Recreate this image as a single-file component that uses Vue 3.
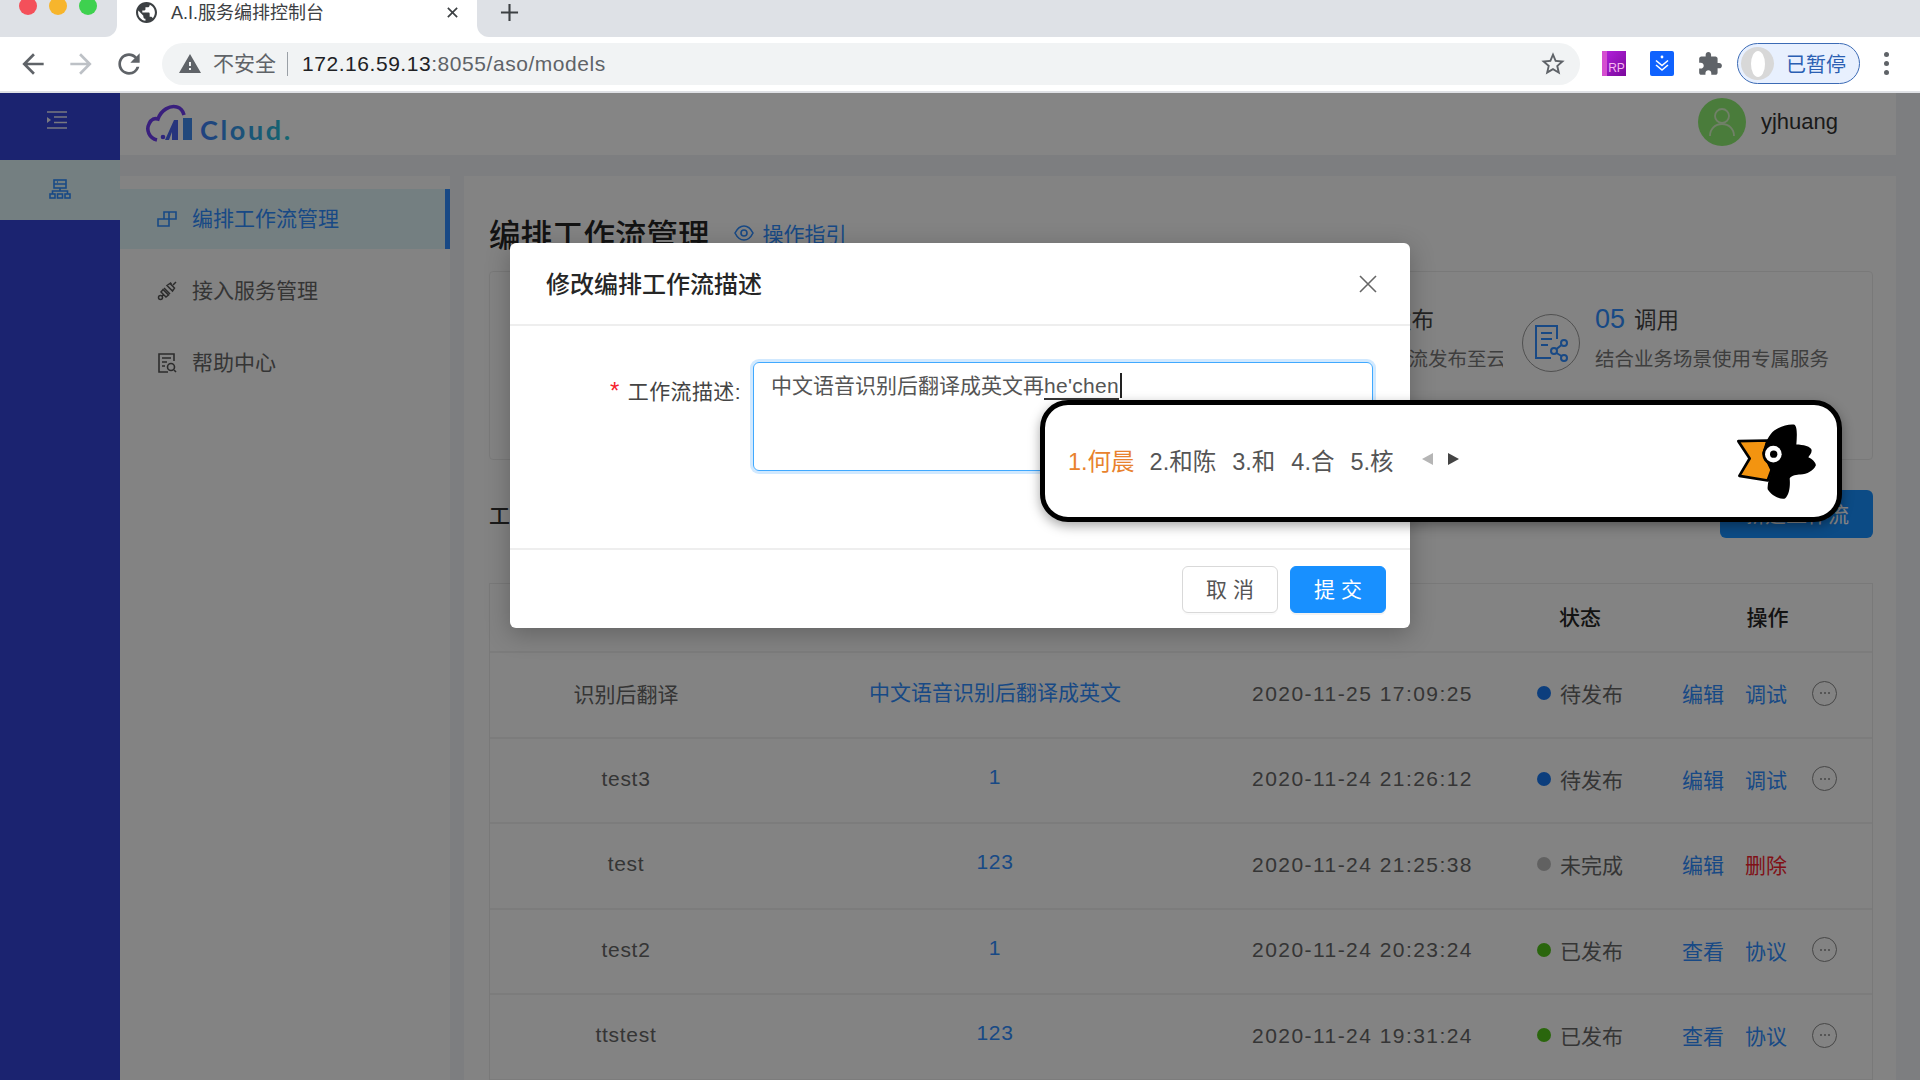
<script setup>
import { ref } from 'vue';

const candidates = ['2.和陈', '3.和', '4.合', '5.核'];

const rows = ref([
    { name: '识别后翻译', desc: '中文语音识别后翻译成英文', time: '2020-11-25 17:09:25', status: 'wait', label: '待发布', ops: ['编辑', '调试'], more: true },
    { name: 'test3', desc: '1', time: '2020-11-24 21:26:12', status: 'wait', label: '待发布', ops: ['编辑', '调试'], more: true },
    { name: 'test', desc: '123', time: '2020-11-24 21:25:38', status: 'none', label: '未完成', ops: ['编辑', '删除'], more: false },
    { name: 'test2', desc: '1', time: '2020-11-24 20:23:24', status: 'done', label: '已发布', ops: ['查看', '协议'], more: true },
    { name: 'ttstest', desc: '123', time: '2020-11-24 19:31:24', status: 'done', label: '已发布', ops: ['查看', '协议'], more: true }
]);

const steps = [
    { no: '01', title: '创建', sub: '新建编排工作流' },
    { no: '02', title: '编排', sub: '拖拽组件编排' },
    { no: '03', title: '调试', sub: '在线调试工作流' },
    { no: '04', title: '发布', sub: '将工作流发布至云端服务' },
    { no: '05', title: '调用', sub: '结合业务场景使用专属服务' }
];

const isLatin = (text) => /^[a-z0-9]+$/i.test(text);
</script>

<template>
    <div class="screen">
        <div class="tabstrip">
            <div class="strip-left">
                <div class="lights">
                    <span class="light red"></span>
                    <span class="light yellow"></span>
                    <span class="light green"></span>
                </div>
            </div>
            <div class="tab">
                <svg class="globe" viewBox="2 2 20 20"><path fill="#3c4043" d="M12 2C6.48 2 2 6.48 2 12s4.48 10 10 10 10-4.48 10-10S17.52 2 12 2zm-1 17.93c-3.95-.49-7-3.85-7-7.93 0-.62.08-1.21.21-1.79L9 15v1c0 1.1.9 2 2 2v1.93zm6.9-2.54c-.26-.81-1-1.39-1.9-1.39h-1v-3c0-.55-.45-1-1-1H8v-2h2c.55 0 1-.45 1-1V7h2c1.1 0 2-.9 2-2v-.41c2.93 1.19 5 4.06 5 7.41 0 2.08-.8 3.97-2.1 5.39z"/></svg>
                <span class="tab-title">A.I.服务编排控制台</span>
                <svg class="tab-close" viewBox="0 0 14 14"><path d="M2 2l10 10M12 2L2 12" stroke="#3c4043" stroke-width="1.8" fill="none"/></svg>
            </div>
            <div class="strip-right">
                <svg class="tab-plus" viewBox="0 0 20 20"><path d="M10 1v18M1 10h18" stroke="#3c4043" stroke-width="2.2" fill="none"/></svg>
            </div>
        </div>

        <div class="toolbar">
            <svg class="nav-icon" viewBox="0 0 24 24"><path fill="#5f6368" d="M20 11H7.83l5.59-5.59L12 4l-8 8 8 8 1.41-1.41L7.83 13H20v-2z"/></svg>
            <svg class="nav-icon" viewBox="0 0 24 24"><path fill="#bdc1c6" d="M12 4l-1.41 1.41L16.17 11H4v2h12.17l-5.58 5.59L12 20l8-8z"/></svg>
            <svg class="nav-icon" viewBox="0 0 24 24"><path fill="#5f6368" d="M17.65 6.35A7.958 7.958 0 0 0 12 4c-4.42 0-7.99 3.58-7.99 8s3.57 8 7.99 8c3.73 0 6.84-2.55 7.73-6h-2.08A5.99 5.99 0 0 1 12 18c-3.31 0-6-2.69-6-6s2.69-6 6-6c1.66 0 3.14.69 4.22 1.78L13 11h7V4l-2.35 2.35z"/></svg>
            <div class="omnibox">
                <svg class="warn" viewBox="0 0 24 24"><path fill="#5f6368" d="M1 21h22L12 2 1 21zm12-3h-2v-2h2v2zm0-4h-2v-4h2v4z"/></svg>
                <span class="insecure">不安全</span>
                <span class="sep"></span>
                <span class="url"><b>172.16.59.13</b>:8055/aso/models</span>
                <svg class="star" viewBox="0 0 24 24"><path fill="#5f6368" d="M22 9.24l-7.19-.62L12 2 9.19 8.63 2 9.24l5.46 4.73L5.82 21 12 17.27 18.18 21l-1.63-7.03L22 9.24zM12 15.4l-3.76 2.27 1-4.28-3.32-2.88 4.38-.38L12 6.1l1.71 4.04 4.38.38-3.32 2.88 1 4.28L12 15.4z"/></svg>
            </div>
            <div class="ext ext-rp"><span>RP</span></div>
            <div class="ext ext-blue">
                <svg viewBox="0 0 24 24"><circle cx="12" cy="6" r="1.4" fill="#fff"/><path d="M6 9.5l6 5 6-5M6 14l6 5 6-5" stroke="#fff" stroke-width="1.6" fill="none"/></svg>
            </div>
            <svg class="puzzle" viewBox="0 0 24 24"><path fill="#5f6368" d="M20.5 11H19V7c0-1.1-.9-2-2-2h-4V3.5C13 2.12 11.88 1 10.5 1S8 2.12 8 3.5V5H4c-1.1 0-1.99.9-1.99 2v3.8H3.5c1.49 0 2.7 1.21 2.7 2.7s-1.21 2.7-2.7 2.7H2V20c0 1.1.9 2 2 2h3.8v-1.5c0-1.49 1.21-2.7 2.7-2.7 1.49 0 2.7 1.21 2.7 2.7V22H17c1.1 0 2-.9 2-2v-4h1.5c1.38 0 2.5-1.12 2.5-2.5S21.88 11 20.5 11z"/></svg>
            <div class="profile">
                <span class="profile-pic"><i></i></span>
                <span>已暂停</span>
            </div>
            <div class="dots"><i></i><i></i><i></i></div>
        </div>

        <div class="app">
            <aside class="rail">
                <div class="rail-top">
                    <svg width="20" height="18" viewBox="0 0 20 18"><path d="M0 1h20M7 6h13M7 11.5h13M0 17h20" stroke="#e8e8f5" stroke-width="1.4" fill="none"/><path d="M0 6l4 3-4 3z" fill="#e8e8f5"/></svg>
                </div>
                <div class="rail-item">
                    <svg width="22" height="20" viewBox="0 0 22 20" fill="none" stroke="#2f8dff" stroke-width="1.6"><rect x="5" y="1" width="12" height="8"/><path d="M5 5h12M8 3h1M11 9v3M3.5 15v-3h15v3"/><rect x="1" y="15" width="5" height="4"/><rect x="8.5" y="15" width="5" height="4"/><rect x="16" y="15" width="5" height="4"/></svg>
                </div>
            </aside>

            <div class="right">
                <header class="topbar">
                    <svg class="logo" width="170" height="44" viewBox="0 -5 170 44">
                        <defs>
                            <linearGradient id="logoGrad" x1="0" y1="0" x2="1" y2="0">
                                <stop offset="0" stop-color="#3f7cf5"/>
                                <stop offset="1" stop-color="#27c6d6"/>
                            </linearGradient>
                        </defs>
                        <path d="M12 35C4 33 1 25 4 19C6 14 10 13 13 14C16 5 25 0 32 2C36 3 38 6 39 10" fill="none" stroke="#6d3df0" stroke-width="3.6"/>
                        <circle cx="18" cy="32" r="2.3" fill="#5a48f0"/>
                        <path d="M20 35L29 15L33 15L33 35L27 35L27 27L24 35z" fill="#4a66f0"/>
                        <rect x="38" y="13" width="9" height="22" fill="#3f8aee"/>
                        <text x="55" y="35" class="logo-text" fill="url(#logoGrad)">Cloud.</text>
                    </svg>
                    <div class="user">
                        <span class="user-pic">
                            <svg width="28" height="30" viewBox="0 0 28 30" fill="none" stroke="#d8f5c8" stroke-width="1.8"><circle cx="14" cy="9" r="7"/><path d="M2 29c0-7 5-12 12-12s12 5 12 12"/></svg>
                        </span>
                        <span class="user-name">yjhuang</span>
                    </div>
                </header>

                <div class="body">
                    <nav class="menu">
                        <div class="menu-item active">
                            <svg width="20" height="16" viewBox="0 0 20 16" fill="none" stroke="#2f8dff" stroke-width="1.6"><path d="M7 8V1h12v7H1v7h11V1"/></svg>
                            <span>编排工作流管理</span>
                        </div>
                        <div class="menu-item">
                            <svg width="20" height="20" viewBox="0 0 20 20" fill="none" stroke="#555" stroke-width="1.5"><circle cx="3.500" cy="16.500" r="2"/><path d="M5 15l2-2M19 1l-3 3M13 1.500l1.500 1.500M7 7l6 6M6 8.500l5.500 5.500-2.500 2-5-5zM10 4.500l5.500 5.500 2-3-4.500-4.500z"/></svg>
                            <span>接入服务管理</span>
                        </div>
                        <div class="menu-item">
                            <svg width="20" height="20" viewBox="0 0 20 20" fill="none" stroke="#555" stroke-width="1.6"><path d="M17 8V1H2v18h9M5 5h9M5 9h5M5 13h3"/><circle cx="14" cy="14" r="3.5"/><path d="M17 17l2 2"/></svg>
                            <span>帮助中心</span>
                        </div>
                    </nav>

                    <main class="main">
                        <div class="page-head">
                            <h1>编排工作流管理</h1>
                            <span class="guide">
                                <svg width="20" height="16" viewBox="0 0 20 16" fill="none" stroke="#2f8dff" stroke-width="1.6"><path d="M1 8c2-4 5.500-7 9-7s7 3 9 7c-2 4-5.500 7-9 7s-7-3-9-7z"/><circle cx="10" cy="8" r="3"/></svg>
                                操作指引
                            </span>
                        </div>

                        <section class="steps">
                            <div v-for="step in steps" :key="step.no" class="step">
                                <span class="step-icon">
                                    <svg width="36" height="38" viewBox="0 0 36 38" fill="none" stroke="#2f8dff" stroke-width="2"><path d="M24 15V2H3v32h15M8 9h11M8 15h11M8 21h7"/><circle cx="31" cy="19" r="3"/><circle cx="21" cy="27" r="3"/><circle cx="31" cy="34" r="3"/><path d="M28.500 21l-5 4M23.500 29l5 3"/></svg>
                                </span>
                                <div class="step-text">
                                    <div class="step-title"><em>{{ step.no }}</em>{{ step.title }}</div>
                                    <div class="step-sub">{{ step.sub }}</div>
                                </div>
                            </div>
                        </section>

                        <div class="list-head">
                            <span class="list-title">工作流列表</span>
                            <button class="create">新建工作流</button>
                        </div>

                        <section class="table">
                            <div class="tr th">
                                <div>名称</div>
                                <div>描述</div>
                                <div>创建时间</div>
                                <div>状态</div>
                                <div>操作</div>
                            </div>
                            <div v-for="row in rows" :key="row.name" class="tr">
                                <div :class="{ latin: isLatin(row.name) }">{{ row.name }}</div>
                                <div class="td-desc" :class="{ latin: isLatin(row.desc) }">{{ row.desc }}</div>
                                <div class="td-time">{{ row.time }}</div>
                                <div class="td-status">
                                    <i class="dot" :class="row.status"></i>{{ row.label }}
                                </div>
                                <div class="td-ops">
                                    <a v-for="op in row.ops" :key="op" :class="{ danger: op === '删除' }">{{ op }}</a>
                                    <span v-if="row.more" class="more"><i></i><i></i><i></i></span>
                                </div>
                            </div>
                        </section>
                    </main>
                </div>
            </div>

            <div class="mask"></div>

            <div class="modal">
                <div class="modal-head">
                    <h2>修改编排工作流描述</h2>
                    <svg class="modal-close" width="20" height="20" viewBox="0 0 20 20"><path d="M2 2l16 16M18 2L2 18" stroke="#666" stroke-width="1.6" fill="none"/></svg>
                </div>
                <div class="modal-body">
                    <label><i>*</i>工作流描述:</label>
                    <div class="input">中文语音识别后翻译成英文再<span class="compose">he'chen</span><span class="caret"></span></div>
                </div>
                <div class="modal-foot">
                    <button class="btn">取 消</button>
                    <button class="btn primary">提 交</button>
                </div>
            </div>

            <div class="ime">
                <span class="cand first">1.何晨</span>
                <span v-for="c in candidates" :key="c" class="cand">{{ c }}</span>
                <span class="arrow left"></span>
                <span class="arrow right"></span>
                <svg class="bird" width="80" height="77" viewBox="45 70 240 230">
                    <path d="M52 124L140 122L128 160L152 210L140 242L55 228L86 176z" fill="#f39410" stroke="#000" stroke-width="8" stroke-linejoin="round"/>
                    <path d="M150 102C160 86 195 72 218 74C230 76 228 110 226 134C245 134 272 140 272 152C272 162 264 168 262 172C275 178 287 190 284 198C278 212 258 224 238 224C228 224 212 226 206 236C208 255 206 285 192 296C175 300 150 285 140 268C138 250 148 230 152 212C140 190 125 165 130 145C134 125 142 112 150 102z" fill="#000"/>
                    <circle cx="157" cy="163" r="33" fill="#000"/>
                    <circle cx="157" cy="163" r="25" fill="#fff"/>
                    <circle cx="158" cy="163" r="11" fill="#000"/>
                </svg>
            </div>
        </div>
    </div>
</template>

<style scoped>
.screen {
    width: 1920px;
    height: 1080px;
    display: flex;
    flex-direction: column;
    overflow: hidden;
    font-family: "Liberation Sans", "Noto Sans CJK SC", sans-serif;
    background: #fff;
    color: #666;
}

/* browser chrome */
.tabstrip {
    height: 37px;
    display: flex;
    flex: none;
    background: #fff;
}

.strip-left {
    width: 117px;
    background: #dee1e6;
    border-bottom-right-radius: 12px;
    overflow: hidden;
}

.lights {
    display: flex;
    gap: 12px;
    padding-left: 19px;
    margin-top: -3px;
}

.light {
    width: 18px;
    height: 18px;
    border-radius: 50%;
}

.red { background: #f4505a; }
.yellow { background: #f7b52c; }
.green { background: #3ed14f; }

.tab {
    width: 360px;
    display: flex;
    align-items: center;
    padding: 0 18px 13px 19px;
    box-sizing: border-box;
    height: 37px;
}

.globe {
    width: 21px;
    height: 21px;
}

.tab-title {
    margin-left: 14px;
    margin-top: -3px;
    font-size: 18px;
    color: #3c4043;
    flex: 1;
}

.tab-close {
    width: 13px;
    height: 13px;
}

.strip-right {
    flex: 1;
    background: #dee1e6;
    border-bottom-left-radius: 12px;
    padding: 3px 0 0 23px;
}

.tab-plus {
    width: 19px;
    height: 19px;
    display: block;
}

.toolbar {
    height: 56px;
    flex: none;
    box-sizing: border-box;
    border-bottom: 2px solid #dfe1e5;
    display: flex;
    align-items: center;
    position: relative;
    padding: 0 0 1px 17px;
}

.nav-icon {
    width: 32px;
    height: 32px;
    margin-right: 16px;
}

.omnibox {
    width: 1418px;
    height: 42px;
    margin-left: 1px;
    border-radius: 21px;
    background: #f1f3f4;
    display: flex;
    align-items: center;
    padding: 0 13px 0 16px;
    box-sizing: border-box;
}

.warn {
    width: 24px;
    height: 24px;
}

.insecure {
    margin: -3px 0 0 11px;
    font-size: 21px;
    color: #5f6368;
}

.sep {
    width: 1px;
    height: 24px;
    background: #9aa0a6;
    margin: 0 14px 0 11px;
}

.url {
    font-size: 21px;
    color: #5f6368;
    flex: 1;
    letter-spacing: 0.55px;
}

.url b {
    font-weight: 400;
    color: #202124;
}

.star {
    width: 28px;
    height: 28px;
}

.ext {
    width: 24px;
    height: 25px;
    flex: none;
}

.ext-rp {
    margin-left: 22px;
    background: linear-gradient(135deg, #b01fd8, #7a0a9c);
    border-left: 5px solid #d44fd0;
    box-sizing: border-box;
    display: flex;
    align-items: flex-end;
    justify-content: center;
}

.ext-rp span {
    font-size: 12px;
    line-height: 15px;
    color: #f6b8ef;
}

.ext-blue {
    margin-left: 24px;
    background: #0f62fe;
    border-radius: 2px;
}

.ext-blue svg {
    display: block;
}

.puzzle {
    width: 26px;
    height: 26px;
    margin-left: 23px;
}

.profile {
    width: 123px;
    height: 41px;
    margin-left: 14px;
    box-sizing: border-box;
    border: 1.5px solid #3c6bb5;
    border-radius: 21px;
    background: #e8f0fe;
    display: flex;
    align-items: center;
    padding-left: 3px;
    gap: 12px;
    font-size: 20px;
    color: #2b5fb3;
}

.profile-pic {
    width: 33px;
    height: 33px;
    border-radius: 50%;
    background: #d8d8d8;
    display: flex;
    justify-content: center;
    align-items: center;
}

.profile-pic i {
    width: 14px;
    height: 26px;
    border-radius: 50%;
    background: #fff;
}

.dots {
    margin-left: 24px;
    display: flex;
    flex-direction: column;
    gap: 4px;
}

.dots i {
    width: 5px;
    height: 5px;
    border-radius: 50%;
    background: #5f6368;
}

/* app under the mask */
.app {
    flex: 1;
    position: relative;
    display: flex;
    overflow: hidden;
    background: #f0f2f5;
}

.rail {
    width: 120px;
    flex: none;
    background: #3443d7;
}

.rail-top {
    height: 67px;
    display: flex;
    justify-content: center;
    align-items: center;
    padding: 0 6px 13px 0;
    box-sizing: border-box;
}

.rail-item {
    height: 60px;
    background: #dff3f8;
    display: flex;
    justify-content: center;
    align-items: center;
    padding-bottom: 2px;
    box-sizing: border-box;
}

.right {
    flex: 1;
    display: flex;
    flex-direction: column;
    min-width: 0;
}

.topbar {
    height: 62px;
    flex: none;
    background: #fff;
    display: flex;
    align-items: center;
    justify-content: space-between;
    padding: 0 0 4px 25px;
    box-sizing: border-box;
    margin-right: 24px;
}

.logo-text {
    font-family: "Lato", sans-serif;
    font-size: 27px;
    letter-spacing: 2.6px;
    font-weight: 700;
}

.user {
    display: flex;
    align-items: center;
    gap: 15px;
    padding-right: 58px;
}

.user-pic {
    width: 48px;
    height: 48px;
    border-radius: 50%;
    background: #8fee72;
    display: flex;
    align-items: center;
    justify-content: center;
}

.user-name {
    font-size: 22px;
    color: #333;
}

.body {
    flex: 1;
    display: flex;
    gap: 14px;
    padding: 21px 24px 0 0;
    min-height: 0;
}

.menu {
    width: 330px;
    flex: none;
    background: #fbfbfb;
    padding-top: 13px;
    display: flex;
    flex-direction: column;
    gap: 12px;
}

.menu-item {
    height: 60px;
    display: flex;
    align-items: center;
    gap: 15px;
    padding: 0 0 4px 37px;
    font-size: 21px;
    color: #666;
    box-sizing: border-box;
}

.menu-item svg {
    margin-top: 3px;
}

.menu-item.active {
    background: #dff3f8;
    color: #2f8dff;
    border-right: 5px solid #2f8dff;
}

.main {
    flex: 1;
    background: #fbfbfb;
    padding: 36px 23px 0 25px;
    min-width: 0;
}

.page-head {
    display: flex;
    align-items: center;
    gap: 24px;
    height: 42px;
}

h1 {
    margin: 0;
    font-size: 31.5px;
    font-weight: 500;
    color: #262626;
}

.guide {
    display: flex;
    align-items: center;
    gap: 9px;
    font-size: 21px;
    color: #2f8dff;
}

.steps {
    margin-top: 17px;
    height: 189px;
    box-sizing: border-box;
    border: 1px solid #e8e8e8;
    border-radius: 4px;
    padding: 31px 0 0 52px;
    display: grid;
    grid-template-columns: repeat(4, 226px) 351px;
    gap: 19px;
}

.step {
    display: flex;
    align-items: flex-start;
    gap: 15px;
    min-width: 0;
}

.step-icon {
    width: 58px;
    height: 58px;
    margin-top: 11px;
    flex: none;
    border: 1px solid #9a9a9a;
    border-radius: 50%;
    box-sizing: border-box;
    display: flex;
    align-items: center;
    justify-content: center;
}

.step-text {
    min-width: 0;
    overflow: hidden;
    white-space: nowrap;
    flex: 1;
}

.step-title {
    font-size: 22.5px;
    line-height: 32px;
    color: #444;
}

.step-title em {
    font-style: normal;
    font-weight: 500;
    color: #2f8dff;
    margin-right: 9px;
    font-size: 27px;
}

.step-sub {
    margin-top: 7px;
    font-size: 19.5px;
    line-height: 30px;
    color: #777;
}

.list-head {
    margin-top: 30px;
    height: 48px;
    display: flex;
    align-items: center;
    justify-content: space-between;
}

.list-title {
    font-size: 21px;
    font-weight: 500;
    color: #333;
}

.create {
    height: 48px;
    padding: 0 24px 3px;
    border: none;
    border-radius: 6px;
    background: #1890ff;
    color: #fff;
    font: inherit;
    font-size: 21px;
}

.table {
    margin-top: 45px;
    border: 1px solid #e8e8e8;
    border-bottom: none;
}

.tr {
    display: grid;
    grid-template-columns: 272px 466px 269px 166px 1fr;
    height: 85.5px;
    box-sizing: border-box;
    border-bottom: 2px solid #eee;
    padding-bottom: 3px;
    align-items: center;
    text-align: center;
    font-size: 21px;
    color: #666;
}

.th {
    height: 69px;
    padding-bottom: 4px;
    font-weight: 500;
    color: #262626;
}

.latin {
    letter-spacing: 0.7px;
}

.td-desc {
    color: #2f8dff;
    margin-top: -4px;
}

.td-time {
    letter-spacing: 1.45px;
    margin-top: 1px;
}

.td-status {
    display: flex;
    align-items: center;
    justify-content: center;
    gap: 9px;
}

.dot {
    width: 14px;
    height: 14px;
    border-radius: 50%;
}

.dot.wait { background: #1878f0; }
.dot.none { background: #bbb; }
.dot.done { background: #52c41a; }

.td-ops {
    display: flex;
    align-items: center;
    padding-left: 19px;
    gap: 21px;
}

.td-ops a {
    color: #2f8dff;
}

.td-ops a.danger {
    color: #f5222d;
}

.more {
    width: 25px;
    height: 25px;
    margin-left: 4px;
    box-sizing: border-box;
    border: 1.5px solid #888;
    border-radius: 50%;
    display: flex;
    align-items: center;
    justify-content: center;
    gap: 2px;
}

.more i {
    width: 2px;
    height: 2px;
    background: #888;
    border-radius: 50%;
}

.mask {
    position: absolute;
    inset: 0;
    background: rgba(0, 0, 0, 0.48);
}

.modal {
    position: absolute;
    left: 510px;
    top: 150px;
    width: 900px;
    height: 385px;
    display: flex;
    flex-direction: column;
    background: #fff;
    border-radius: 6px;
    box-shadow: 0 6px 24px rgba(0, 0, 0, 0.25);
}

.modal-head {
    height: 83px;
    flex: none;
    box-sizing: border-box;
    border-bottom: 2px solid #eee;
    display: flex;
    align-items: center;
    justify-content: space-between;
    padding: 0 32px 3px 36px;
}

.modal-close {
    margin-top: 3px;
}

h2 {
    margin: 0;
    font-size: 24px;
    font-weight: 500;
    color: #262626;
}

.modal-body {
    flex: 1;
    display: flex;
    align-items: flex-start;
    padding: 36px 0 0 0;
    border-bottom: 2px solid #eee;
}

.modal-body label {
    width: 243px;
    flex: none;
    text-align: right;
    padding-right: 12px;
    box-sizing: border-box;
    font-size: 21px;
    letter-spacing: 0.4px;
    line-height: 33px;
    margin-top: 12px;
    color: #444;
}

.modal-body label i {
    color: #f5222d;
    font-style: normal;
    margin-right: 8px;
    font-size: 24px;
}

.input {
    width: 620px;
    height: 109px;
    box-sizing: border-box;
    border: 1.5px solid #40a9ff;
    border-radius: 6px;
    box-shadow: 0 0 0 3px rgba(24, 144, 255, 0.2);
    padding: 6px 17px;
    font-size: 21px;
    line-height: 33px;
    color: #555;
}

.compose {
    border-bottom: 2px solid #333;
    padding-bottom: 1px;
    letter-spacing: 0.3px;
}

.caret {
    display: inline-block;
    width: 1.5px;
    height: 25px;
    margin-left: 1px;
    background: #222;
    vertical-align: -5px;
}

.modal-foot {
    height: 78px;
    flex: none;
    display: flex;
    align-items: center;
    justify-content: flex-end;
    gap: 12px;
    padding-right: 24px;
}

.btn {
    width: 96px;
    height: 47px;
    padding-bottom: 3px;
    border: 1.5px solid #d9d9d9;
    border-radius: 6px;
    background: #fff;
    color: #555;
    font: inherit;
    font-size: 21px;
    box-shadow: 0 2px 0 rgba(0, 0, 0, 0.02);
}

.btn.primary {
    border-color: #1890ff;
    background: #1890ff;
    color: #fff;
    box-shadow: 0 2px 0 rgba(0, 0, 0, 0.05);
}

/* input method popup */
.ime {
    position: absolute;
    left: 1040px;
    top: 307px;
    width: 802px;
    height: 122px;
    box-sizing: border-box;
    border: 5.5px solid #000;
    border-radius: 28px;
    background: #fff;
    box-shadow: 0 4px 12px rgba(0, 0, 0, 0.35);
    display: flex;
    align-items: center;
    padding: 0 21px 0 23px;
    gap: 16px;
    font-size: 23.5px;
    color: #555;
}

.cand {
    margin-top: -3px;
}

.cand.first {
    color: #e8822e;
    margin-right: -1px;
}

.arrow {
    width: 0;
    height: 0;
    border-top: 6px solid transparent;
    border-bottom: 6px solid transparent;
    margin-top: -4px;
}

.arrow.left {
    border-right: 11px solid #b5b5b5;
    margin-left: 12px;
}

.arrow.right {
    border-left: 11px solid #444;
    margin-left: -1px;
}

.bird {
    margin-left: auto;
}
</style>

<style>
html, body {
    margin: 0;
    overflow: hidden;
}
</style>
